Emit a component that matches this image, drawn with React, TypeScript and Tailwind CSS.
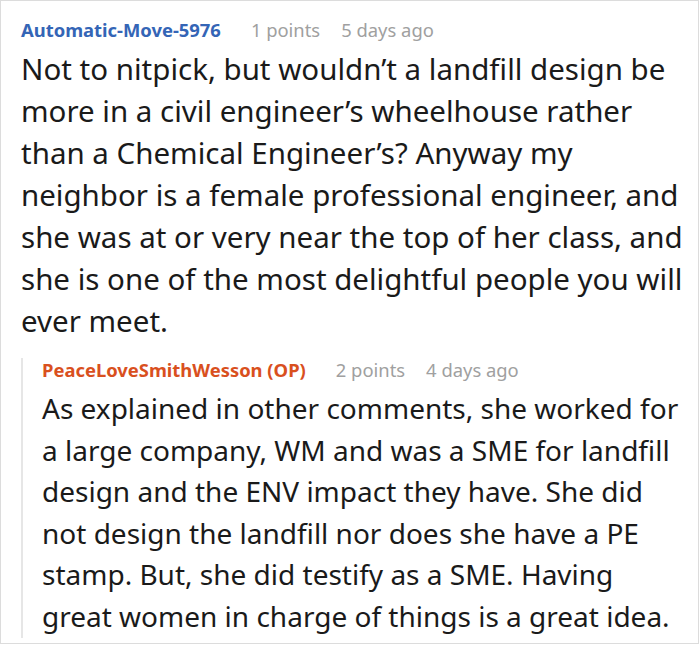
const font = { fontFamily: '"Noto Sans", "Open Sans", sans-serif' };

type HeaderProps = { name: string; nameClass: string; points: string; ago: string };

function CommentHeader({ name, nameClass, points, ago }: HeaderProps) {
  return (
    <div className="flex items-center text-[18.4px] leading-[24px] whitespace-nowrap">
      <span className={`font-bold ${nameClass}`}>{name}</span>
      <span className="ml-[30px] text-[#a0a0a0]">{points}</span>
      <span className="ml-[21px] text-[#a0a0a0]">{ago}</span>
    </div>
  );
}

const replyLines = [
  "As explained in other comments, she worked for",
  "a large company, WM and was a SME for landfill",
  "design and the ENV impact they have. She did",
  "not design the landfill nor does she have a PE",
  "stamp. But, she did testify as a SME. Having",
  "great women in charge of things is a great idea.",
];

export default function App() {
  return (
    <div style={font} className="w-[699px] h-[644px] border border-[#dcdcdc] bg-white pl-[20px] pt-[17px] overflow-hidden">
      <CommentHeader name="Automatic-Move-5976" nameClass="text-[#3465b6]" points="1 points" ago="5 days ago" />
      <p className="mt-[6px] pr-[8px] text-[29.5px] leading-[42px] text-[#1a1a1a]">
        Not to nitpick, but wouldn’t a landfill design be more in a civil engineer’s wheelhouse rather than a
        Chemical Engineer’s? Anyway my neighbor is a female professional engineer, and she was at or very near the
        top of her class, and she is one of the most delightful people you will ever meet.
      </p>

      <div className="mt-[16px] border-l-2 border-[#e6e6e6] pl-[19px]">
        <CommentHeader name="PeaceLoveSmithWesson (OP)" nameClass="text-[#d9501e]" points="2 points" ago="4 days ago" />
        <div className="mt-[6px] text-[28px] leading-[41.6px] text-[#1a1a1a] whitespace-nowrap">
          {replyLines.map((line) => (
            <div key={line}>{line}</div>
          ))}
        </div>
      </div>
    </div>
  );
}
